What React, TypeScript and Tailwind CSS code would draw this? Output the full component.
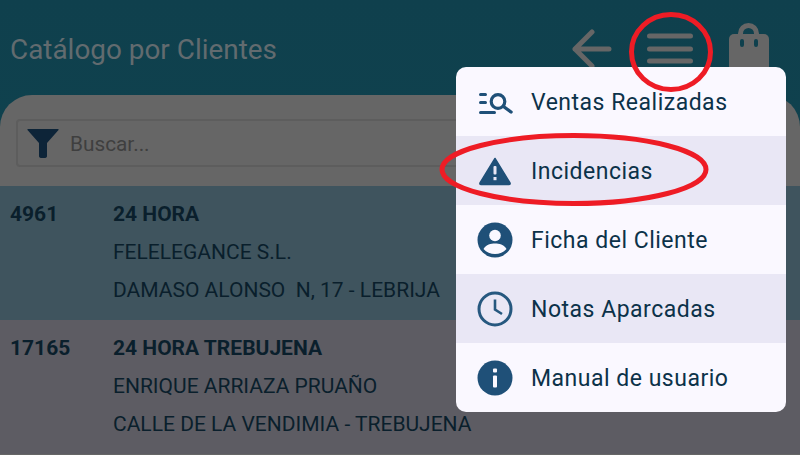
const rows = [
  { code: "4961", name: "24 HORA", owner: "FELELEGANCE S.L.", address: "DAMASO ALONSO  N, 17 - LEBRIJA", selected: true },
  { code: "17165", name: "24 HORA TREBUJENA", owner: "ENRIQUE ARRIAZA PRUAÑO", address: "CALLE DE LA VENDIMIA - TREBUJENA", selected: false },
]

const SearchLines = () => (
  <svg viewBox="0 0 36 26" className="w-[36px] h-[26px]" fill="none" stroke="#1f5078" strokeLinecap="round">
    <path d="M3.5 5.5h5M3.5 13.5h5M3.5 23.5h14" strokeWidth="3" />
    <circle cx="21" cy="12.5" r="6.8" strokeWidth="3.2" />
    <path d="M26.5 17.5l7.5 5.5" strokeWidth="3.4" />
  </svg>
)

const Warning = () => (
  <svg viewBox="0 0 34 30" className="w-[34px] h-[30px]">
    <path d="M17 2.5 L32 27 Q32.5 28.5 31 28.5 H3 Q1.5 28.5 2 27 Z" fill="#1f5078" stroke="#1f5078" strokeWidth="1.5" strokeLinejoin="round" />
    <rect x="15.5" y="10" width="3" height="8.5" rx="1" fill="#e9e7f5" />
    <rect x="15.5" y="21" width="3" height="3.2" fill="#e9e7f5" />
  </svg>
)

const Account = () => (
  <svg viewBox="0 0 36 36" className="w-[36px] h-[36px]">
    <circle cx="18" cy="18" r="17.5" fill="#1f5078" />
    <circle cx="18" cy="13.5" r="5.8" fill="#faf8ff" />
    <path d="M6.5 27 C9 22.5 14 21.5 18 21.5 C22 21.5 27 22.5 29.5 27 C26.5 30.5 22.5 32 18 32 C13.5 32 9.5 30.5 6.5 27 Z" fill="#faf8ff" />
  </svg>
)

const Clock = () => (
  <svg viewBox="0 0 36 36" className="w-[36px] h-[36px]" fill="none" stroke="#26587f">
    <circle cx="18" cy="18" r="16" strokeWidth="3" />
    <path d="M18 8.5V18.5L25 23" strokeWidth="2.6" />
  </svg>
)

const Info = () => (
  <svg viewBox="0 0 36 36" className="w-[36px] h-[36px]">
    <circle cx="18" cy="18" r="17.5" fill="#1f5078" />
    <rect x="16" y="8.5" width="4" height="4" rx="1" fill="#faf8ff" />
    <rect x="16" y="15.5" width="4" height="12" rx="1" fill="#faf8ff" />
  </svg>
)

const menu = [
  { label: "Ventas Realizadas", icon: <SearchLines />, shaded: false },
  { label: "Incidencias", icon: <Warning />, shaded: true },
  { label: "Ficha del Cliente", icon: <Account />, shaded: false },
  { label: "Notas Aparcadas", icon: <Clock />, shaded: true },
  { label: "Manual de usuario", icon: <Info />, shaded: false },
]

export default function App() {
  return (
    <div className="relative w-[800px] h-[455px] overflow-hidden bg-gradient-to-b from-[#0f404d] to-[#0f4450] font-['Roboto',sans-serif]">
      <header className="flex items-center h-[95px] pt-[3px] pl-[10px]">
        <h1 className="pt-[2px] text-[27.9px] leading-none text-[#626b6f]">Catálogo por Clientes</h1>
        <div className="ml-auto flex items-center pr-[31px]">
          <svg viewBox="0 0 40 50" className="w-[40px] h-[50px] mr-[35px]" fill="none" stroke="#666666" strokeWidth="5" strokeLinecap="round" strokeLinejoin="round">
            <path d="M37 25H3M20 8L3 25L20 42" />
          </svg>
          <svg viewBox="0 0 46 50" className="w-[46px] h-[50px] mr-[36px]" fill="none" stroke="#666666" strokeWidth="5" strokeLinecap="round">
            <path d="M2.5 12H43.5M2.5 25H43.5M2.5 37H43.5" />
          </svg>
          <svg viewBox="0 0 40 50" className="w-[40px] h-[50px] overflow-visible">
            <path d="M5 10h30a5 5 0 0 1 5 5v35H0V15a5 5 0 0 1 5-5z" fill="#666666" />
            <path d="M11.5 14V9.5a8 8 0 0 1 16 0V14" fill="none" stroke="#666666" strokeWidth="5" />
            <path d="M13 17v4M27 17v4" stroke="#0f404d" strokeWidth="4" strokeLinecap="round" />
          </svg>
        </div>
      </header>

      <main className="h-[360px] rounded-t-[32px] bg-[#666666] overflow-hidden">
        <div className="h-[91px] px-[16px] pt-[24px]">
          <div className="flex items-center h-[48px] rounded-[4px] border-2 border-[#5d5d5d] pl-[9px]">
            <svg viewBox="0 0 32 32" className="w-[32px] h-[32px]" fill="#0d2438">
              <path d="M1 2h30q1 0 .5 1L20 16v13q0 2-3 2h-2q-3 0-3-2V16L.5 3Q0 2 1 2z" />
            </svg>
            <span className="ml-[11px] pt-[4px] text-[20.8px] text-[#3f3f3f]">Buscar...</span>
          </div>
        </div>

        {rows.map((row) => (
          <div
            key={row.code}
            className={`flex h-[134px] pl-[10px] pt-[9px] text-[21px] leading-[38px] text-[#0a1f2c] ${row.selected ? "bg-[#3f545e]" : "bg-[#5d5c63]"}`}
          >
            <div className="w-[103px] font-bold">{row.code}</div>
            <div className="whitespace-pre">
              <div className="font-bold">{row.name}</div>
              <div>{row.owner}</div>
              <div>{row.address}</div>
            </div>
          </div>
        ))}
      </main>

      <nav className="absolute left-[456px] top-[67px] w-[330px] rounded-[10px] overflow-hidden bg-[#faf8ff]">
        {menu.map((item) => (
          <div key={item.label} className={`flex items-center h-[69px] ${item.shaded ? "bg-[#e9e7f5]" : ""}`}>
            <div className="w-[75px] flex justify-center pl-[3px]">{item.icon}</div>
            <span className="pt-[3px] text-[23px] tracking-[0.5px] text-[#0c3249]">{item.label}</span>
          </div>
        ))}
      </nav>

      <svg className="absolute left-0 top-0 pointer-events-none" width="800" height="455" fill="none" stroke="#ee1c25">
        <ellipse cx="671" cy="52" rx="39.5" ry="37.5" strokeWidth="5" />
        <ellipse cx="574" cy="169.5" rx="132" ry="34" strokeWidth="5" />
      </svg>
    </div>
  )
}
